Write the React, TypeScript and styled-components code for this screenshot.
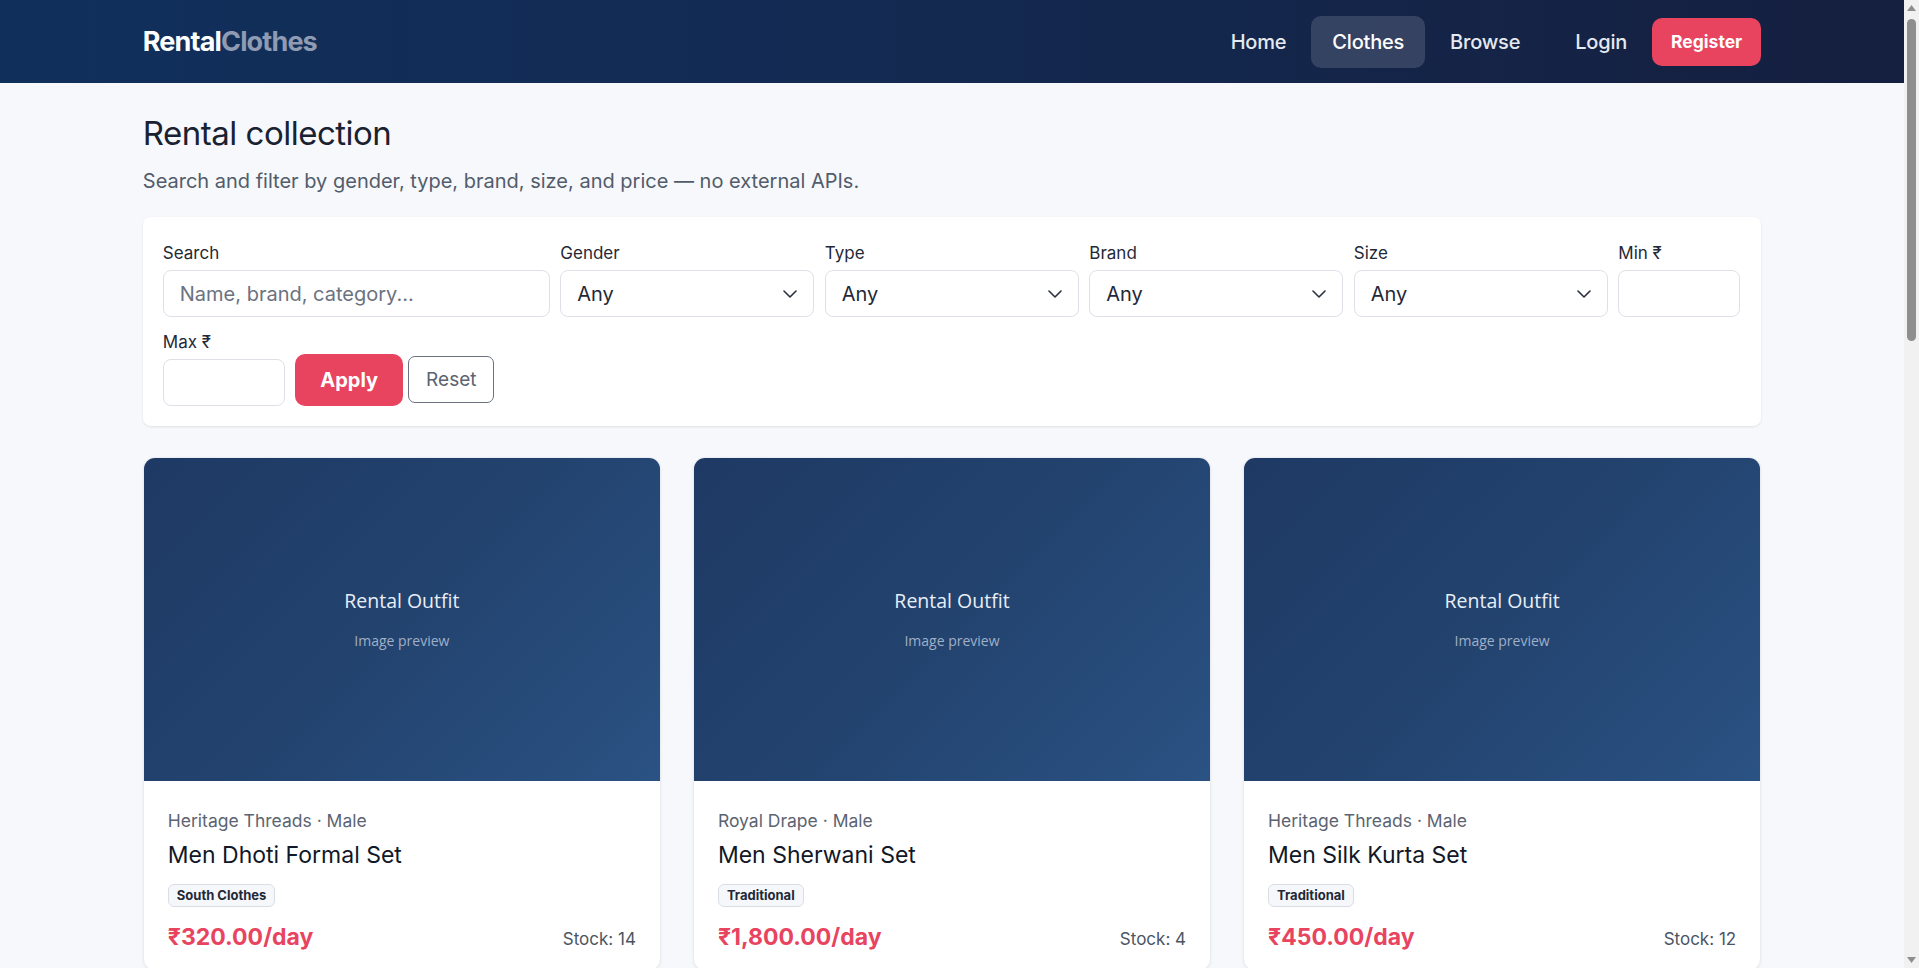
import React from "react";
import styled, { createGlobalStyle } from "styled-components";

const GlobalStyle = createGlobalStyle`
  * { box-sizing: border-box; }
  html, body { margin: 0; padding: 0; }
  body {
    background: #f6f8fb;
    font-family: Inter, "Noto Sans", "Liberation Sans", sans-serif;
    color: #1f2937;
    padding-right: 15px;
  }
`;

const ScrollTrack = styled.div`
  position: fixed;
  top: 0;
  right: 0;
  width: 15px;
  height: 100vh;
  background: #f1f1f1;
  z-index: 10;
`;

const ScrollArrow = styled.svg<{ $bottom?: boolean }>`
  position: absolute;
  left: 2px;
  ${(p) => (p.$bottom ? "bottom: 4px;" : "top: 4px;")}
`;

const ScrollThumb = styled.div`
  position: absolute;
  left: 3px;
  top: 19px;
  width: 9px;
  height: 322px;
  border-radius: 5px;
  background: #8e8e8e;
`;

const NavBar = styled.header`
  height: 83px;
  background: linear-gradient(90deg, #10305c 0%, #132a52 45%, #151f3f 100%);
`;

const NavInner = styled.div`
  width: 85%;
  height: 100%;
  margin: 0 auto;
  display: flex;
  align-items: center;
  justify-content: space-between;
`;

const Logo = styled.a`
  font-size: 27px;
  font-weight: 700;
  letter-spacing: -0.85px;
  color: #ffffff;
  text-decoration: none;
  span {
    color: #8f9bb2;
  }
`;

const NavRight = styled.nav`
  display: flex;
  align-items: center;
`;

const NavGroup = styled.div<{ $offset?: number }>`
  display: flex;
  align-items: center;
  gap: 4px;
  margin-left: ${(p) => p.$offset ?? 0}px;
`;

const NavLink = styled.a<{ $active?: boolean }>`
  display: flex;
  align-items: center;
  height: 52px;
  padding: 0 21px;
  border-radius: 10px;
  font-size: 20px;
  font-weight: 500;
  letter-spacing: -0.2px;
  color: ${(p) => (p.$active ? "#ffffff" : "#e5e9f0")};
  background: ${(p) => (p.$active ? "rgba(255,255,255,0.14)" : "transparent")};
  text-decoration: none;
`;

const RegisterButton = styled.a`
  display: flex;
  align-items: center;
  height: 48px;
  padding: 0 19px;
  border-radius: 10px;
  background: #e8445f;
  color: #ffffff;
  font-size: 17.5px;
  font-weight: 700;
  text-decoration: none;
`;

const Main = styled.main`
  width: 85%;
  margin: 0 auto;
  padding: 31px 0 0;
`;

const Title = styled.h1`
  margin: 0;
  font-size: 33px;
  line-height: 38px;
  font-weight: 400;
  letter-spacing: -0.5px;
  color: #1a2232;
`;

const Subtitle = styled.p`
  margin: 14px 0 21px;
  font-size: 20px;
  line-height: 30px;
  color: #525c6b;
`;

const FilterCard = styled.form`
  background: #ffffff;
  border-radius: 8px;
  box-shadow: 0 1px 3px rgba(15, 23, 42, 0.07), 0 1px 2px rgba(15, 23, 42, 0.03);
  padding: 24px 20px 20px;
  display: flex;
  flex-wrap: wrap;
  align-items: flex-end;
  column-gap: 10.5px;
  row-gap: 13px;
`;

const Field = styled.label<{ $w: number }>`
  display: flex;
  flex-direction: column;
  width: ${(p) => p.$w}px;
`;

const FieldLabel = styled.span`
  font-size: 17px;
  line-height: 24px;
  margin-bottom: 5px;
  color: #1f2937;
`;

const TextInput = styled.input`
  height: 47px;
  width: 100%;
  border: 1px solid #dde1e7;
  border-radius: 8px;
  padding: 0 16px;
  font-family: inherit;
  font-size: 20px;
  color: #1f2937;
  background: #fff;
  outline: none;
  &::placeholder {
    color: #6b7280;
  }
`;

const SelectWrap = styled.div`
  position: relative;
  width: 100%;
`;

const Select = styled.select`
  appearance: none;
  -webkit-appearance: none;
  height: 47px;
  width: 100%;
  border: 1px solid #dde1e7;
  border-radius: 8px;
  padding: 0 40px 0 16px;
  font-family: inherit;
  font-size: 20px;
  color: #1f2937;
  background: #fff;
  outline: none;
`;

const Chevron = styled.svg`
  position: absolute;
  right: 17px;
  top: 50%;
  margin-top: -4px;
  pointer-events: none;
`;

const ButtonGroup = styled.div`
  display: flex;
  align-items: flex-end;
  gap: 5px;
`;

const ApplyButton = styled.button`
  height: 52px;
  padding: 0 25px;
  border: none;
  border-radius: 10px;
  background: #e8445f;
  color: #fff;
  font-family: inherit;
  font-size: 20px;
  font-weight: 700;
`;

const ResetButton = styled.button`
  height: 47px;
  margin-bottom: 3px;
  padding: 0 17px;
  border: 1px solid #6b7280;
  border-radius: 7px;
  background: #fff;
  color: #5b6470;
  font-family: inherit;
  font-size: 19px;
`;

const Grid = styled.section`
  margin-top: 31px;
  display: grid;
  grid-template-columns: repeat(3, 1fr);
  gap: 32px;
`;

const Card = styled.article`
  background: #fff;
  border-radius: 12px;
  overflow: hidden;
  border: 1px solid #e9ecf0;
  box-shadow: 0 1px 3px rgba(15, 23, 42, 0.06);
`;

const Preview = styled.div`
  aspect-ratio: 16 / 10;
  background: linear-gradient(135deg, #1e3964 0%, #23436f 50%, #2a5283 100%);
  display: flex;
  flex-direction: column;
  align-items: center;
  justify-content: center;
  font-family: "Open Sans", "Noto Sans", sans-serif;
`;

const PreviewTitle = styled.div`
  font-size: 19.5px;
  line-height: 26px;
  color: #e8eef7;
`;

const PreviewSub = styled.div`
  margin-top: 17px;
  font-size: 14px;
  line-height: 20px;
  color: #9fb0c7;
`;

const CardBody = styled.div`
  padding: 27px 24px 18px;
`;

const Meta = styled.div`
  font-size: 17.5px;
  line-height: 25px;
  color: #5b6472;
`;

const ItemName = styled.h3`
  margin: 7px 0 0;
  font-size: 23px;
  line-height: 30px;
  font-weight: 400;
  color: #111827;
`;

const Tag = styled.span`
  display: inline-block;
  margin-top: 14px;
  padding: 3px 8px;
  font-size: 13px;
  line-height: 15px;
  font-weight: 700;
  color: #1f2937;
  background: #f5f7fa;
  border: 1px solid #d9dee5;
  border-radius: 6px;
`;

const CardFooter = styled.div`
  margin-top: 15px;
  display: flex;
  align-items: baseline;
  justify-content: space-between;
`;

const Price = styled.span`
  font-size: 23px;
  line-height: 30px;
  font-weight: 700;
  color: #e8445f;
`;

const Stock = styled.span`
  font-size: 17px;
  color: #4b5563;
`;

const Footer = styled.footer`
  margin-top: 64px;
  padding: 40px 0;
  text-align: center;
  font-size: 15px;
  color: #6b7280;
  border-top: 1px solid #e5e7eb;
`;

type Item = {
  brand: string;
  gender: string;
  name: string;
  tag: string;
  price: string;
  stock: number;
};

const items: Item[] = [
  { brand: "Heritage Threads", gender: "Male", name: "Men Dhoti Formal Set", tag: "South Clothes", price: "₹320.00", stock: 14 },
  { brand: "Royal Drape", gender: "Male", name: "Men Sherwani Set", tag: "Traditional", price: "₹1,800.00", stock: 4 },
  { brand: "Heritage Threads", gender: "Male", name: "Men Silk Kurta Set", tag: "Traditional", price: "₹450.00", stock: 12 },
  { brand: "Royal Drape", gender: "Female", name: "Women Banarasi Saree", tag: "Traditional", price: "₹950.00", stock: 6 },
  { brand: "Urban Loom", gender: "Female", name: "Women Lehenga Choli", tag: "Wedding", price: "₹2,200.00", stock: 3 },
  { brand: "Heritage Threads", gender: "Female", name: "Women Anarkali Suit", tag: "Festive", price: "₹650.00", stock: 9 },
  { brand: "Urban Loom", gender: "Male", name: "Men Nehru Jacket Set", tag: "Party Wear", price: "₹520.00", stock: 11 },
  { brand: "Royal Drape", gender: "Male", name: "Men Bandhgala Suit", tag: "Formal", price: "₹1,400.00", stock: 5 },
  { brand: "Heritage Threads", gender: "Female", name: "Women Kanjivaram Saree", tag: "South Clothes", price: "₹1,250.00", stock: 7 },
  { brand: "Urban Loom", gender: "Female", name: "Women Evening Gown", tag: "Western", price: "₹1,100.00", stock: 8 },
  { brand: "Royal Drape", gender: "Male", name: "Men Tuxedo Set", tag: "Formal", price: "₹1,600.00", stock: 6 },
  { brand: "Heritage Threads", gender: "Female", name: "Women Half Saree Set", tag: "South Clothes", price: "₹700.00", stock: 10 },
];

const ChevronIcon = () => (
  <Chevron width="14" height="8" viewBox="0 0 14 8" fill="none">
    <path d="M1 1l6 6 6-6" stroke="#2b3140" strokeWidth="1.6" strokeLinecap="round" strokeLinejoin="round" />
  </Chevron>
);

const SelectField = ({ label }: { label: string }) => (
  <Field $w={254}>
    <FieldLabel>{label}</FieldLabel>
    <SelectWrap>
      <Select defaultValue="any">
        <option value="any">Any</option>
      </Select>
      <ChevronIcon />
    </SelectWrap>
  </Field>
);

const PageScrollbar = () => (
  <ScrollTrack aria-hidden>
    <ScrollArrow width="11" height="8" viewBox="0 0 11 8">
      <path d="M5.5 1L10 7H1z" fill="#8e8e8e" />
    </ScrollArrow>
    <ScrollThumb />
    <ScrollArrow $bottom width="11" height="8" viewBox="0 0 11 8">
      <path d="M5.5 7L10 1H1z" fill="#8e8e8e" />
    </ScrollArrow>
  </ScrollTrack>
);

export default function App() {
  return (
    <>
      <GlobalStyle />
      <PageScrollbar />
      <NavBar>
        <NavInner>
          <Logo href="#">
            Rental<span>Clothes</span>
          </Logo>
          <NavRight>
            <NavGroup>
              <NavLink href="#">Home</NavLink>
              <NavLink href="#" $active>
                Clothes
              </NavLink>
              <NavLink href="#">Browse</NavLink>
            </NavGroup>
            <NavGroup $offset={13}>
              <NavLink href="#">Login</NavLink>
              <RegisterButton href="#">Register</RegisterButton>
            </NavGroup>
          </NavRight>
        </NavInner>
      </NavBar>
      <Main>
        <Title>Rental collection</Title>
        <Subtitle>Search and filter by gender, type, brand, size, and price — no external APIs.</Subtitle>
        <FilterCard onSubmit={(e) => e.preventDefault()}>
          <Field $w={387}>
            <FieldLabel>Search</FieldLabel>
            <TextInput placeholder="Name, brand, category..." />
          </Field>
          <SelectField label="Gender" />
          <SelectField label="Type" />
          <SelectField label="Brand" />
          <SelectField label="Size" />
          <Field $w={122}>
            <FieldLabel>Min ₹</FieldLabel>
            <TextInput />
          </Field>
          <Field $w={122}>
            <FieldLabel>Max ₹</FieldLabel>
            <TextInput />
          </Field>
          <ButtonGroup>
            <ApplyButton type="submit">Apply</ApplyButton>
            <ResetButton type="button">Reset</ResetButton>
          </ButtonGroup>
        </FilterCard>
        <Grid>
          {items.map((it) => (
            <Card key={it.name}>
              <Preview>
                <PreviewTitle>Rental Outfit</PreviewTitle>
                <PreviewSub>Image preview</PreviewSub>
              </Preview>
              <CardBody>
                <Meta>
                  {it.brand} · {it.gender}
                </Meta>
                <ItemName>{it.name}</ItemName>
                <Tag>{it.tag}</Tag>
                <CardFooter>
                  <Price>{it.price}/day</Price>
                  <Stock>Stock: {it.stock}</Stock>
                </CardFooter>
              </CardBody>
            </Card>
          ))}
        </Grid>
      </Main>
      <Footer>© RentalClothes</Footer>
    </>
  );
}
